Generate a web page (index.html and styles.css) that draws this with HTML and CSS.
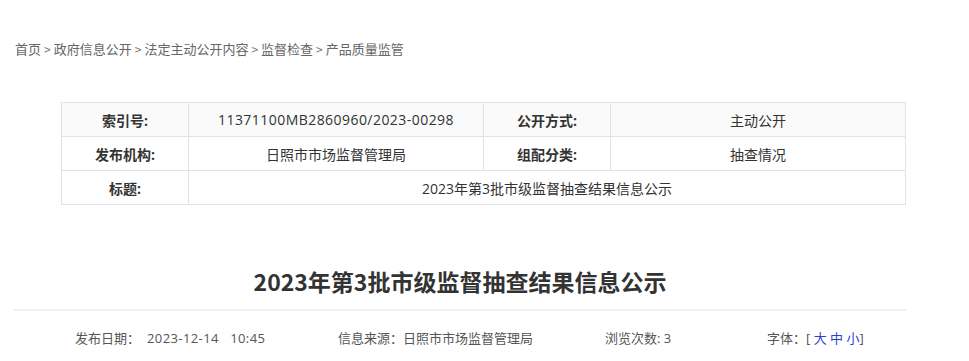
FILE: index.html
```html
<!DOCTYPE html>
<html lang="zh-CN">
<head>
  <meta charset="UTF-8">
  <meta name="viewport" content="width=device-width, initial-scale=1.0">
  <title>2023年第3批市级监督抽查结果信息公示</title>
  <link rel="stylesheet" href="styles.css">
</head>
<body>
  <div class="page">
    <!-- 面包屑 -->
    <div class="crumbs">
      <a href="#">首页</a><span class="sep">&gt;</span><a href="#">政府信息公开</a><span class="sep">&gt;</span><a href="#">法定主动公开内容</a><span class="sep">&gt;</span><a href="#">监督检查</a><span class="sep">&gt;</span><a href="#">产品质量监管</a>
    </div>

    <!-- 信息索引表 -->
    <table class="info-table">
      <tr>
        <th>索引号:</th>
        <td class="code">11371100MB2860960/2023-00298</td>
        <th>公开方式:</th>
        <td>主动公开</td>
      </tr>
      <tr>
        <th>发布机构:</th>
        <td>日照市市场监督管理局</td>
        <th>组配分类:</th>
        <td>抽查情况</td>
      </tr>
      <tr>
        <th>标题:</th>
        <td colspan="3">2023年第3批市级监督抽查结果信息公示</td>
      </tr>
    </table>

    <!-- 正文标题 -->
    <h1 class="title">2023年第3批市级监督抽查结果信息公示</h1>
    <div class="divider"></div>

    <div class="meta">
      <span class="meta-date">发布日期：<span class="time">2023-12-14&nbsp;&nbsp;&nbsp;10:45</span></span>
      <span class="meta-source">信息来源：日照市市场监督管理局</span>
      <span class="meta-views">浏览次数: 3</span>
      <span class="meta-font">字体：[ <a href="#">大</a> <a href="#">中</a> <a href="#">小</a>]</span>
    </div>
  </div>
</body>
</html>
```

FILE: styles.css
```css
* {
  margin: 0;
  padding: 0;
  box-sizing: border-box;
}

body {
  font-family: 'Noto Sans CJK SC', 'Liberation Sans', sans-serif;
  background: #fff;
  color: #333;
}

.page {
  width: 892px;
  margin-left: 14px;
}

.crumbs {
  padding-top: 39px;
  padding-left: 1px;
  line-height: 20px;
  font-size: 13px;
  color: #777;
}

.crumbs a {
  color: #666;
  text-decoration: none;
}

.crumbs .sep {
  padding: 0 3px;
  font-size: 12px;
}

.info-table {
  margin: 43px 0 0 47px;
  width: 845px;
  border-collapse: collapse;
  font-family: 'Open Sans', 'Noto Sans CJK SC', sans-serif;
  font-size: 14px;
  table-layout: fixed;
}

.info-table th,
.info-table td {
  border: 1px solid #e2e2e2;
  height: 34px;
  text-align: center;
  color: #333;
}

.info-table tr:first-child {
  background: #fafafa;
}

.info-table th {
  width: 127px;
  font-weight: bold;
}

.info-table .code {
  letter-spacing: 0.45px;
}

.title {
  margin-top: 60px;
  line-height: 32px;
  font-size: 23px;
  font-weight: bold;
  text-align: center;
  color: #333;
}

.divider {
  margin-top: 12px;
  height: 2px;
  background: #efefef;
}

.meta {
  display: flex;
  margin-top: 17px;
  padding-left: 61px;
  line-height: 20px;
  font-family: 'Open Sans', 'Noto Sans CJK SC', sans-serif;
  font-size: 13px;
  color: #555;
}

.meta-date {
  width: 263px;
}

.meta-date .time {
  margin-left: 7px;
  letter-spacing: 0.4px;
}

.meta-source {
  width: 267px;
}

.meta-views {
  width: 162px;
}

.meta-font a {
  color: #2a3fd0;
  text-decoration: none;
}
```
